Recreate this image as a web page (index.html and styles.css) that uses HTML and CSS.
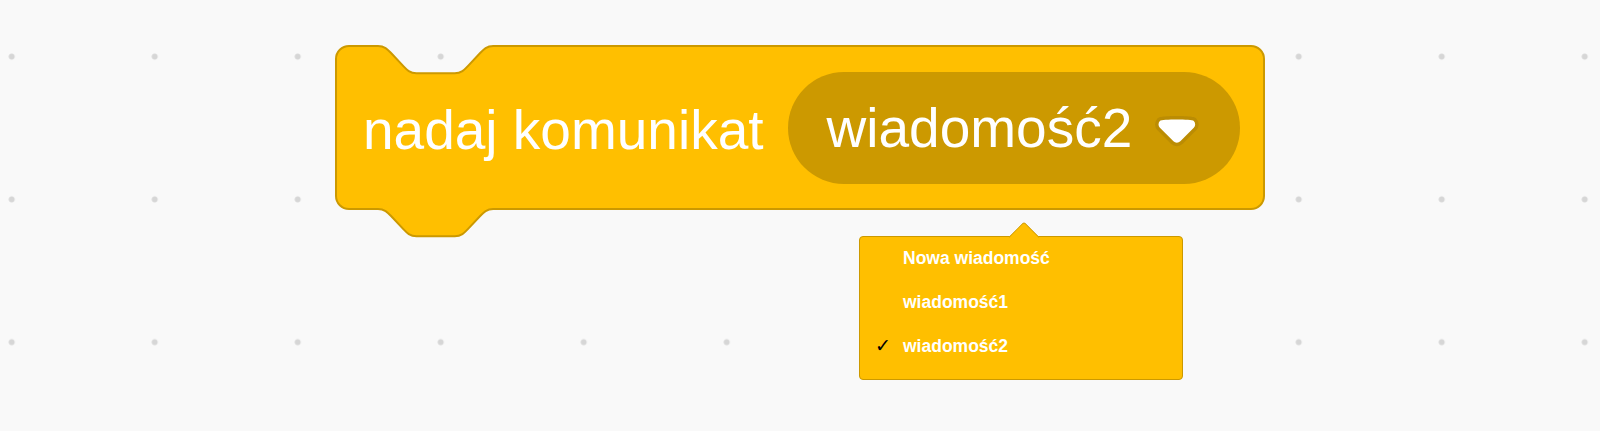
FILE: index.html
```html
<!DOCTYPE html>
<html lang="pl">
<head>
    <meta charset="UTF-8">
    <meta name="viewport" content="width=device-width, initial-scale=1.0">
    <title>nadaj komunikat</title>
    <link rel="stylesheet" href="styles.css">
</head>
<body>
    <div class="workspace">
        <!-- event block: "broadcast" with message dropdown -->
        <div class="block">
            <svg class="block-shape" width="930" height="193" viewBox="0 0 930 193">
                <path d="M1,14 A13,13 0 0 1 14,1 H43 c6.4,0 9.6,3.4 12.8,6.8 l12.8,13.6 c3.2,3.4 6.4,6.8 12.8,6.8 h38.4 c6.4,0 9.6,-3.4 12.8,-6.8 l12.8,-13.6 c3.2,-3.4 6.4,-6.8 12.8,-6.8 H916 A13,13 0 0 1 929,14 V151 A13,13 0 0 1 916,164 H158.2 c-6.4,0 -9.6,3.4 -12.8,6.8 l-12.8,13.6 c-3.2,3.4 -6.4,6.8 -12.8,6.8 h-38.4 c-6.4,0 -9.6,-3.4 -12.8,-6.8 l-12.8,-13.6 c-3.2,-3.4 -6.4,-6.8 -12.8,-6.8 H14 A13,13 0 0 1 1,151 Z"/>
            </svg>
            <span class="block-label">nadaj komunikat</span>
            <div class="field">
                <span class="field-text">wiadomość2</span>
                <svg class="field-arrow" width="43.7" height="30.2" viewBox="0 0 12.71 8.79">
                    <path class="arrow-shadow" d="M12.71,2.44A2.41,2.41,0,0,1,12,4.16L8.08,8.08a2.45,2.45,0,0,1-3.45,0L0.72,4.16A2.42,2.42,0,0,1,0,2.440,2.48,2.48,0,0,1,0.71,0.71C1,0.47,1.43,0,6.36,0S11.75,0.46,12,0.71A2.44,2.44,0,0,1,12.71,2.44Z"/>
                    <path class="arrow-fill" d="M6.36,7.79a1.430,1.430,0,0,1-1-0.42L1.42,3.45a1.44,1.44,0,0,1,0-2c0.56-0.56,9.31-0.56,9.87,0a1.44,1.44,0,0,1,0,2L7.37,7.37A1.43,1.43,0,0,1,6.36,7.79Z"/>
                </svg>
            </div>
        </div>

        <!-- dropdown menu for the message field -->
        <div class="menu">
            <div class="menu-item"><span class="check"></span>Nowa wiadomość</div>
            <div class="menu-item"><span class="check"></span>wiadomość1</div>
            <div class="menu-item"><span class="check">✓</span>wiadomość2</div>
        </div>
    </div>
</body>
</html>
```

FILE: styles.css
```css
body {
    margin: 0;
    padding: 0;
    font-family: "Liberation Sans", Arial, Helvetica, sans-serif;
    background-color: #f9f9f9;
}
.workspace {
    position: relative;
    width: 1600px;
    height: 431px;
    overflow: hidden;
    background-color: #f9f9f9;
    background-image: radial-gradient(circle, #d6d6d6 2.6px, transparent 3.4px);
    background-size: 143px 142.8px;
    background-position: -59.8px -14.8px;
}

/* block */
.block {
    position: absolute;
    left: 335px;
    top: 45px;
    width: 930px;
    height: 165px;
    box-sizing: border-box;
    padding: 0 0 0 28px;
    display: flex;
    align-items: center;
    gap: 24px;
}
.block-shape {
    position: absolute;
    left: 0;
    top: 0;
    overflow: visible;
}
.block-shape path {
    fill: #ffbf00;
    stroke: #cc9900;
    stroke-width: 2;
}
.block-label {
    position: relative;
    padding-top: 5px;
    color: #fff;
    font-size: 55px;
    line-height: 55px;
    white-space: nowrap;
}
.field {
    position: relative;
    height: 112px;
    border-radius: 56px;
    background-color: #cc9900;
    display: flex;
    align-items: center;
    padding: 0 41px 0 39px;
    gap: 23px;
}
.field-text {
    padding-top: 2px;
    color: #fff;
    font-size: 55px;
    line-height: 55px;
    white-space: nowrap;
}
.field-arrow {
    margin-top: 8px;
}
.arrow-shadow { fill: #231f20; opacity: 0.1; }
.arrow-fill { fill: #fff; }

/* dropdown menu */
.menu {
    position: absolute;
    left: 859px;
    top: 236px;
    width: 324px;
    height: 144px;
    box-sizing: border-box;
    background-color: #ffbf00;
    border: 1px solid #cc9900;
    border-radius: 4px;
    padding: 0 0 11px;
}
.menu::before {
    content: "";
    position: absolute;
    left: 153px;
    top: -11px;
    width: 22px;
    height: 22px;
    box-sizing: border-box;
    background-color: #ffbf00;
    border-top: 1px solid #cc9900;
    border-left: 1px solid #cc9900;
    border-top-left-radius: 3px;
    transform: rotate(45deg);
}
.menu-item {
    position: relative;
    display: flex;
    align-items: baseline;
    padding-left: 15px;
    height: 43.5px;
    line-height: 43.5px;
    color: #fff;
    font-size: 17.5px;
    font-weight: bold;
    white-space: nowrap;
}
.check {
    display: inline-block;
    width: 28px;
    color: #000;
    font-family: "DejaVu Sans", sans-serif;
    font-size: 19px;
    font-weight: normal;
}
```
